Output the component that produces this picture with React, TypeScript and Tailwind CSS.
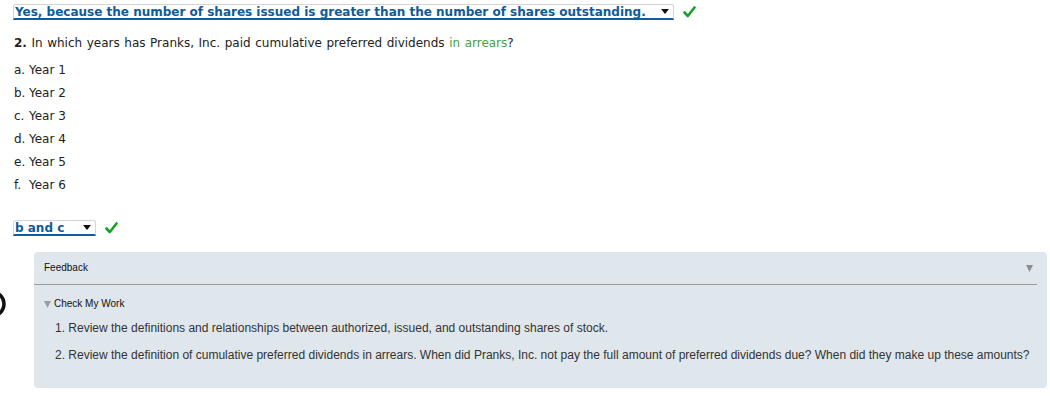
import React from "react";

const verdana = { fontFamily: '"DejaVu Sans", Verdana, sans-serif' };

function Check() {
    return (
        <svg width="13" height="12" viewBox="0 0 13 12" className="shrink-0">
            <path d="M1.5 6.5 L4.8 10 L11.5 1.5" fill="none" stroke="#19a02b" strokeWidth="2.6" strokeLinecap="round" strokeLinejoin="round" />
        </svg>
    );
}

function Arrow() {
    return (
        <svg width="8" height="5" viewBox="0 0 8 5" className="shrink-0">
            <path d="M0 0 H8 L4 5 Z" fill="#111" />
        </svg>
    );
}

function Select({ label, width }: { label: string; width: string }) {
    return (
        <div className="flex items-center gap-[9px]">
            <div className={`${width} h-[16px] flex items-center justify-between pl-[1px] pr-[4px] rounded-t-[3px] border border-[#d5d5d5] border-b-[2px] border-b-[#1b5c97]`}>
                <span className="text-[12px] font-bold text-[#0e5b9a] underline underline-offset-[2px] leading-[14px] whitespace-nowrap">{label}</span>
                <Arrow />
            </div>
            <Check />
        </div>
    );
}

export default function App() {
    const years = ["a.", "b.", "c.", "d.", "e.", "f."];
    return (
        <div className="w-[1050px] h-[418px] bg-white text-[#222] overflow-hidden" style={verdana}>
            <div className="pl-[13px] pt-[4px]">
                <Select label="Yes, because the number of shares issued is greater than the number of shares outstanding." width="w-[661px]" />

                <p className="mt-[16px] pl-[1px] text-[12px] [word-spacing:0.75px] leading-[15px]">
                    <span className="font-bold">2.</span> In which years has Pranks, Inc. paid cumulative preferred dividends <span className="text-[#46a049]">in arrears</span>?
                </p>

                <ul className="mt-[12px] pl-[1px] flex flex-col gap-[8px]">
                    {years.map((l, i) => (
                        <li key={l} className="text-[12px] leading-[15px] flex">
                            <span className="w-[15px]">{l}</span>
                            <span>Year {i + 1}</span>
                        </li>
                    ))}
                </ul>

                <div className="mt-[27px]">
                    <Select label="b and c" width="w-[83px]" />
                </div>
            </div>

            <div className="flex mt-[16px]">
                <div className="w-[34px] shrink-0 pt-[38px]">
                    <svg width="8" height="28" viewBox="0 0 8 28">
                        <circle cx="-8" cy="14" r="12" fill="none" stroke="#111" strokeWidth="3.5" />
                    </svg>
                </div>
                <div className="w-[1013px] h-[136px] bg-[#dfe6ec] rounded-[4px] pt-[10px]" style={{ fontFamily: '"Liberation Sans", Arial, sans-serif' }}>
                    <div className="flex items-center justify-between pl-[10px] pr-[14px]">
                        <span className="text-[10px] text-[#111] leading-[12px]">Feedback</span>
                        <svg width="7" height="7" viewBox="0 0 7 7"><path d="M0 0 H7 L3.5 7 Z" fill="#8a8f94" /></svg>
                    </div>
                    <div className="mt-[10px] mr-[10px] h-px bg-[#9a9da0]" />
                    <div className="mt-[13px] pl-[10px] flex items-center gap-[3px]">
                        <svg width="7" height="7" viewBox="0 0 7 7"><path d="M0 0 H7 L3.5 7 Z" fill="#9a9fa4" /></svg>
                        <span className="text-[10px] text-[#111] leading-[12px]">Check My Work</span>
                    </div>
                    <ol className="mt-[11px] pl-[21px] flex flex-col gap-[13px] text-[12px] leading-[14px] text-[#333]">
                        <li>1. Review the definitions and relationships between authorized, issued, and outstanding shares of stock.</li>
                        <li>2. Review the definition of cumulative preferred dividends in arrears. When did Pranks, Inc. not pay the full amount of preferred dividends due? When did they make up these amounts?</li>
                    </ol>
                </div>
            </div>
        </div>
    );
}
